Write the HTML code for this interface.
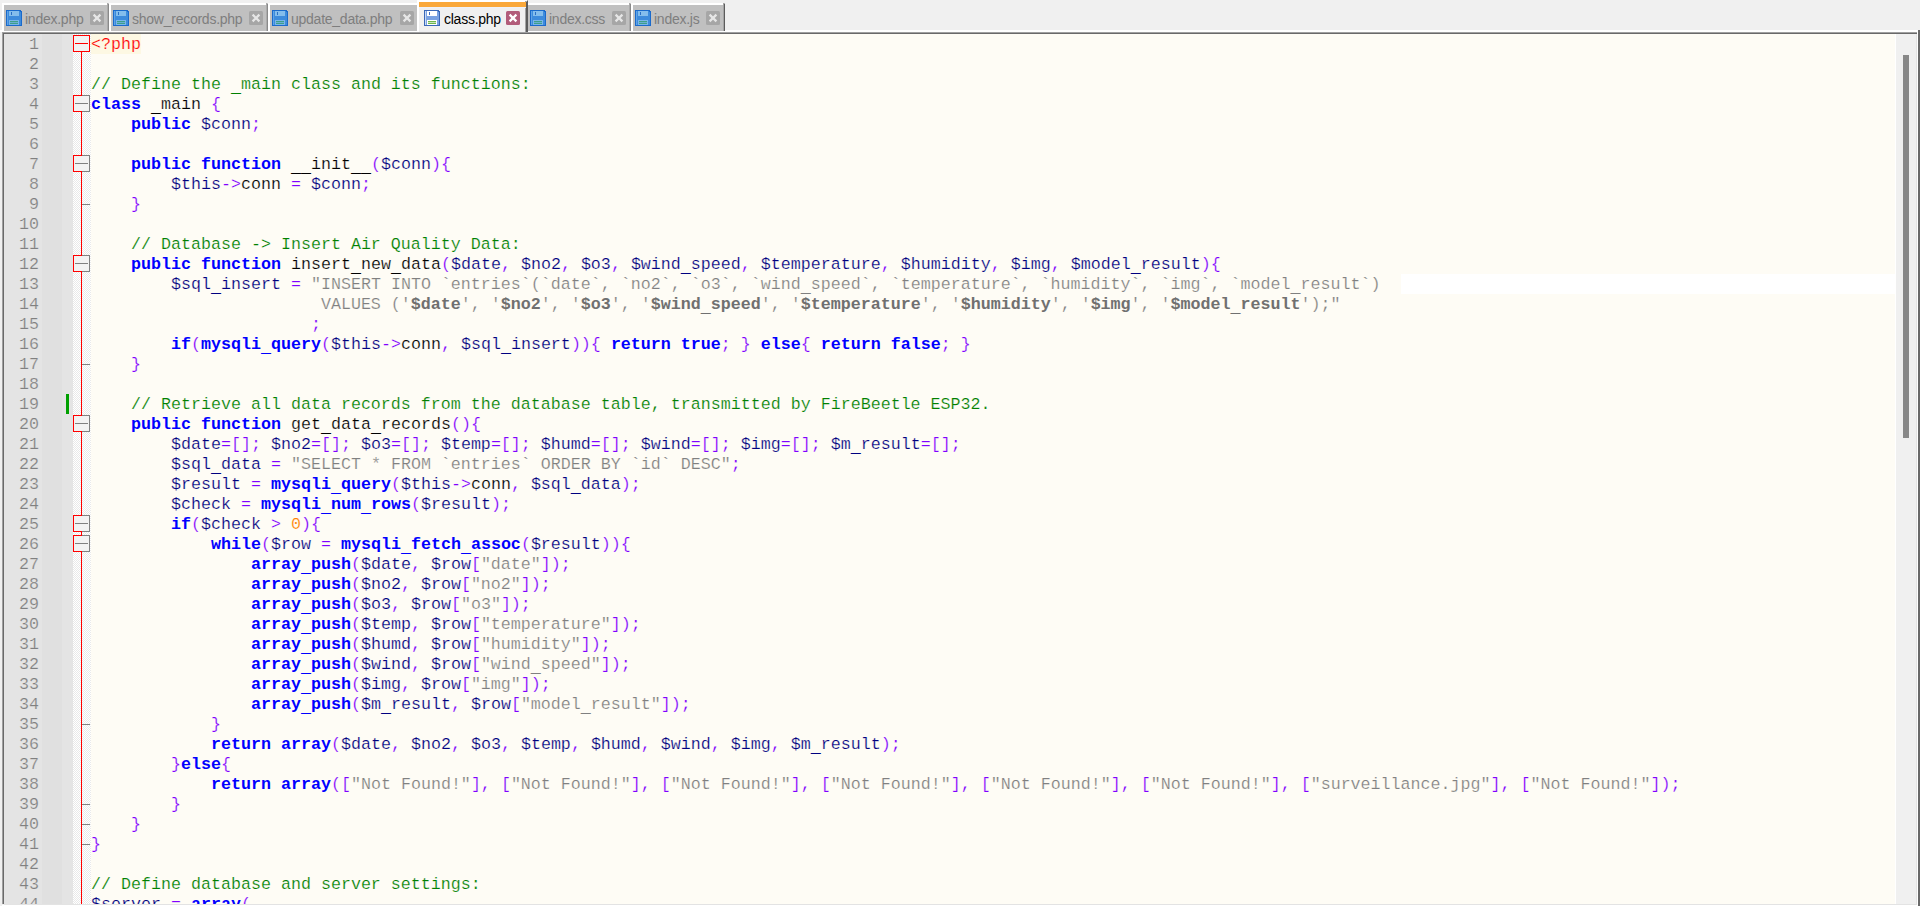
<!DOCTYPE html>
<html><head><meta charset="utf-8"><title>class.php</title>
<style>
html,body{margin:0;padding:0}
body{width:1920px;height:906px;overflow:hidden;background:#f0f0f0;position:relative;font-family:"Liberation Sans",sans-serif}
.abs,.tab,.obar,.oline,.tic,.tl,.tcx,.ln,.cl,.fb,.fe{position:absolute}
/* tab bar */
.tab{top:3px;height:28px;background:#c0c0c0;box-sizing:border-box;border-left:2px solid #fff;border-top:2px solid #fff;border-right:2px solid #8a8a8a}
.tab u{position:absolute;right:-1px;top:-2px;width:1px;height:28px;background:#ababab;display:block}
.tab.last{border-right-color:#5c5c5c}
.tab.last u{background:#a4a4a4}
.tab.nohl{border-left:0}
.tab.nodk{border-right:0}
.tab.nodk u{display:none}
.tab.act{top:0;height:32px;background:#f0f0f0;border-top:2px solid #fff;border-right:2px solid #5c5c5c}
.tab.act:after{content:"";position:absolute;right:0;top:-1px;width:1px;height:31px;background:#a4a4a4}
.obar{top:2px;height:5px;background:#faa83a}
.oline{position:absolute;top:7px;height:1px;background:#eef2f9}
.tic{top:10px;width:16px;height:16px}
.tic svg,.tcx svg{display:block}
.tl{top:10px;height:18px;line-height:18px;font-size:14px;color:#7e7e7e;white-space:pre;letter-spacing:-0.25px;margin-left:0}
.tl.ta{color:#000}
.tcx{top:11px;width:14px;height:14px}
/* editor frame */
#frame{position:absolute;left:2px;top:32px;width:1916px;height:872px;background:#fefcf5;box-sizing:border-box;border-left:1px solid #a0a0a0;border-top:1px solid #a0a0a0}
#frame2{position:absolute;left:3px;top:33px;width:1914px;height:871px;box-sizing:border-box;border-left:1px solid #696969;border-top:1px solid #696969}
#ed{position:absolute;left:0;top:0;width:1920px;height:906px;overflow:hidden}
#clip{position:absolute;left:0;top:0;width:1920px;height:904px;overflow:hidden}
#m1{position:absolute;left:4px;top:34px;width:38px;height:870px;background:#e4e4e4}
#m2{position:absolute;left:42px;top:34px;width:20px;height:870px;background:#e0e0e0}
#m3{position:absolute;left:62px;top:34px;width:11px;height:870px;background:#e4e4e4}
#m4{position:absolute;left:73px;top:34px;width:18px;height:870px;background:repeating-conic-gradient(#e9e9e9 0% 25%,#ffffff 0% 50%) 0 0/2px 2px}
#fl{position:absolute;left:81px;top:52px;width:1px;height:852px;background:#ff0000}
#chg{position:absolute;left:66px;top:394px;width:3px;height:20px;background:#00a000}
#wb{position:absolute;left:1401px;top:274px;width:495px;height:20px;background:#fff}
#sb{position:absolute;left:1895px;top:34px;width:21px;height:870px;background:#f0f0f0;box-sizing:border-box;border-left:1px solid #fff}
#bl1{position:absolute;left:4px;top:904px;width:1913px;height:1px;background:#e3e3e3}
#bl2{position:absolute;left:2px;top:905px;width:1916px;height:1px;background:#fff}
#rl1{position:absolute;left:1916px;top:34px;width:1px;height:871px;background:#e3e3e3}
#th{position:absolute;left:1903px;top:55px;width:6px;height:383px;background:#888}
#re1{position:absolute;left:1917px;top:30px;width:1px;height:876px;background:#fff}
#re2{position:absolute;left:1918px;top:30px;width:2px;height:876px;background:#696969}
#tw{position:absolute;left:0;top:30px;width:1918px;height:2px;background:#fff}
.ln{left:4px;width:35px;height:20px;line-height:20px;text-align:right;font-family:"Liberation Mono",monospace;font-size:16.67px;color:#808080;-webkit-text-stroke:0.2px #e4e4e4;white-space:pre;padding-top:1px;box-sizing:border-box}
.cl{left:91px;height:20px;line-height:20px;font-family:"Liberation Mono",monospace;font-size:16.67px;color:#000;-webkit-text-stroke:0.2px #fefcf5;white-space:pre;padding-top:1px;box-sizing:border-box}
.k{color:#0000ff;font-weight:bold;-webkit-text-stroke:0}
.v{color:#000080}
.o{color:#8000ff}
.s{color:#808080}
.sv{color:#707070;font-weight:bold;-webkit-text-stroke:0}
.c{color:#008000}
.n{color:#ff8000}
.d{color:#000}
.cl u{text-decoration:none;position:relative;top:3px;-webkit-text-stroke:0}
.t{color:#ff0000;-webkit-text-stroke:0.2px #fdf8e3;background:#fdf8e3;display:inline-block;height:20px;margin-top:-1px;padding-top:1px;box-sizing:border-box;vertical-align:top}
/* fold markers */
.fb{left:73px;width:17px;height:17px;box-sizing:border-box;background:#f2f2f2}
.fb.fr{border:1px solid #ff0000}
.fb.fr i{position:absolute;left:1px;top:7px;width:13px;height:1px;background:#ff0000}
.fb.fh{border:1px solid #808080}
.fb.fh b{position:absolute;left:-1px;top:-1px;width:9px;height:17px;box-sizing:border-box;border:1px solid #ff0000;border-right:0}
.fb.fh i{position:absolute;left:1px;top:7px;width:13px;height:1px;background:#808080}
.fe{left:82px;width:8px;height:1px;background:#808080}
</style></head><body>
<div id="ed"><div id="clip">
<div id="tw"></div>
<div class="tab" style="left:2px;width:107px"><u></u></div>
<div class="tic" style="left:6px"><svg class="ic" width="16" height="16" viewBox="0 0 16 16" shape-rendering="crispEdges"><path d="M0 0H14L16 2V16H0Z" fill="#1a6acb"/><path d="M1 1H13.5L15 2.5V15H1Z" fill="#3d8bdc"/><rect x="1" y="1" width="1" height="14" fill="#5fa3e6"/><rect x="3" y="1" width="10" height="5" fill="#84bdec"/><rect x="5" y="2" width="1" height="3" fill="#2a6fc4"/><rect x="3" y="10" width="10" height="5" fill="#7ab5ea"/><rect x="4" y="11" width="8" height="1" fill="#3d9f8a"/><rect x="4" y="12" width="8" height="1" fill="#6aaed0"/><rect x="4" y="13" width="8" height="1" fill="#3d9f8a"/></svg></div>
<div class="tl" style="left:25px">index.php</div>
<div class="tcx" style="left:90px"><svg class="cx" width="14" height="14" viewBox="0 0 14 14"><rect x="0" y="0" width="14" height="14" rx="1.5" fill="#a6a6a6"/><path d="M3.6 3.6L10.4 10.4M10.4 3.6L3.6 10.4" stroke="#e6e6e6" stroke-width="2.2" stroke-linecap="butt"/></svg></div>
<div class="tab" style="left:109px;width:159px"><u></u></div>
<div class="tic" style="left:113px"><svg class="ic" width="16" height="16" viewBox="0 0 16 16" shape-rendering="crispEdges"><path d="M0 0H14L16 2V16H0Z" fill="#1a6acb"/><path d="M1 1H13.5L15 2.5V15H1Z" fill="#3d8bdc"/><rect x="1" y="1" width="1" height="14" fill="#5fa3e6"/><rect x="3" y="1" width="10" height="5" fill="#84bdec"/><rect x="5" y="2" width="1" height="3" fill="#2a6fc4"/><rect x="3" y="10" width="10" height="5" fill="#7ab5ea"/><rect x="4" y="11" width="8" height="1" fill="#3d9f8a"/><rect x="4" y="12" width="8" height="1" fill="#6aaed0"/><rect x="4" y="13" width="8" height="1" fill="#3d9f8a"/></svg></div>
<div class="tl" style="left:132px">show_records.php</div>
<div class="tcx" style="left:249px"><svg class="cx" width="14" height="14" viewBox="0 0 14 14"><rect x="0" y="0" width="14" height="14" rx="1.5" fill="#a6a6a6"/><path d="M3.6 3.6L10.4 10.4M10.4 3.6L3.6 10.4" stroke="#e6e6e6" stroke-width="2.2" stroke-linecap="butt"/></svg></div>
<div class="tab nodk" style="left:268px;width:149px"><u></u></div>
<div class="tic" style="left:272px"><svg class="ic" width="16" height="16" viewBox="0 0 16 16" shape-rendering="crispEdges"><path d="M0 0H14L16 2V16H0Z" fill="#1a6acb"/><path d="M1 1H13.5L15 2.5V15H1Z" fill="#3d8bdc"/><rect x="1" y="1" width="1" height="14" fill="#5fa3e6"/><rect x="3" y="1" width="10" height="5" fill="#84bdec"/><rect x="5" y="2" width="1" height="3" fill="#2a6fc4"/><rect x="3" y="10" width="10" height="5" fill="#7ab5ea"/><rect x="4" y="11" width="8" height="1" fill="#3d9f8a"/><rect x="4" y="12" width="8" height="1" fill="#6aaed0"/><rect x="4" y="13" width="8" height="1" fill="#3d9f8a"/></svg></div>
<div class="tl" style="left:291px">update_data.php</div>
<div class="tcx" style="left:400px"><svg class="cx" width="14" height="14" viewBox="0 0 14 14"><rect x="0" y="0" width="14" height="14" rx="1.5" fill="#a6a6a6"/><path d="M3.6 3.6L10.4 10.4M10.4 3.6L3.6 10.4" stroke="#e6e6e6" stroke-width="2.2" stroke-linecap="butt"/></svg></div>
<div class="tab act" style="left:417px;width:111px"></div>
<div class="obar" style="left:419px;width:107px"></div>
<div class="oline" style="left:419px;width:107px"></div>
<div class="tic" style="left:424px"><svg class="ic" width="16" height="16" viewBox="0 0 16 16" shape-rendering="crispEdges"><path d="M0 0H14L16 2V16H0Z" fill="#3a68b8"/><path d="M1 1H13.5L15 2.5V15H1Z" fill="#7aa2e2"/><rect x="1" y="1" width="1" height="14" fill="#c9daf6"/><rect x="3" y="1" width="10" height="5" fill="#ffffff"/><rect x="5" y="2" width="1" height="3" fill="#3f6cc0"/><rect x="3" y="10" width="10" height="5" fill="#ffffff"/><rect x="4" y="11" width="8" height="1" fill="#6db64b"/><rect x="4" y="12" width="8" height="1" fill="#c9e3bd"/><rect x="4" y="13" width="8" height="1" fill="#6db64b"/></svg></div>
<div class="tl ta" style="left:444px">class.php</div>
<div class="tcx" style="left:506px"><svg class="cx" width="14" height="14" viewBox="0 0 14 14"><rect x="0" y="0" width="14" height="14" rx="1.5" fill="#b25c7a"/><path d="M3.6 3.6L10.4 10.4M10.4 3.6L3.6 10.4" stroke="#ffffff" stroke-width="2.2" stroke-linecap="butt"/></svg></div>
<div class="tab nohl" style="left:528px;width:103px"><u></u></div>
<div class="tic" style="left:530px"><svg class="ic" width="16" height="16" viewBox="0 0 16 16" shape-rendering="crispEdges"><path d="M0 0H14L16 2V16H0Z" fill="#1a6acb"/><path d="M1 1H13.5L15 2.5V15H1Z" fill="#3d8bdc"/><rect x="1" y="1" width="1" height="14" fill="#5fa3e6"/><rect x="3" y="1" width="10" height="5" fill="#84bdec"/><rect x="5" y="2" width="1" height="3" fill="#2a6fc4"/><rect x="3" y="10" width="10" height="5" fill="#7ab5ea"/><rect x="4" y="11" width="8" height="1" fill="#3d9f8a"/><rect x="4" y="12" width="8" height="1" fill="#6aaed0"/><rect x="4" y="13" width="8" height="1" fill="#3d9f8a"/></svg></div>
<div class="tl" style="left:549px">index.css</div>
<div class="tcx" style="left:612px"><svg class="cx" width="14" height="14" viewBox="0 0 14 14"><rect x="0" y="0" width="14" height="14" rx="1.5" fill="#a6a6a6"/><path d="M3.6 3.6L10.4 10.4M10.4 3.6L3.6 10.4" stroke="#e6e6e6" stroke-width="2.2" stroke-linecap="butt"/></svg></div>
<div class="tab last" style="left:631px;width:94px"><u></u></div>
<div class="tic" style="left:635px"><svg class="ic" width="16" height="16" viewBox="0 0 16 16" shape-rendering="crispEdges"><path d="M0 0H14L16 2V16H0Z" fill="#1a6acb"/><path d="M1 1H13.5L15 2.5V15H1Z" fill="#3d8bdc"/><rect x="1" y="1" width="1" height="14" fill="#5fa3e6"/><rect x="3" y="1" width="10" height="5" fill="#84bdec"/><rect x="5" y="2" width="1" height="3" fill="#2a6fc4"/><rect x="3" y="10" width="10" height="5" fill="#7ab5ea"/><rect x="4" y="11" width="8" height="1" fill="#3d9f8a"/><rect x="4" y="12" width="8" height="1" fill="#6aaed0"/><rect x="4" y="13" width="8" height="1" fill="#3d9f8a"/></svg></div>
<div class="tl" style="left:654px">index.js</div>
<div class="tcx" style="left:706px"><svg class="cx" width="14" height="14" viewBox="0 0 14 14"><rect x="0" y="0" width="14" height="14" rx="1.5" fill="#a6a6a6"/><path d="M3.6 3.6L10.4 10.4M10.4 3.6L3.6 10.4" stroke="#e6e6e6" stroke-width="2.2" stroke-linecap="butt"/></svg></div>
<div id="frame"></div><div id="frame2"></div>
<div id="m1"></div><div id="m2"></div><div id="m3"></div><div id="m4"></div>
<div id="wb"></div>
<div id="fl"></div><div id="chg"></div>
<div class="ln" style="top:34px">1</div>
<div class="cl" style="top:34px"><span class="t">&lt;?php</span></div>
<div class="ln" style="top:54px">2</div>
<div class="ln" style="top:74px">3</div>
<div class="cl" style="top:74px"><span class="c">// Define the <u>_</u>main class and its functions:</span></div>
<div class="ln" style="top:94px">4</div>
<div class="cl" style="top:94px"><span class="k">class</span> <span class="d"><u>_</u>main</span> <span class="o">{</span></div>
<div class="ln" style="top:114px">5</div>
<div class="cl" style="top:114px">    <span class="k">public</span> <span class="v">$conn</span><span class="o">;</span></div>
<div class="ln" style="top:134px">6</div>
<div class="ln" style="top:154px">7</div>
<div class="cl" style="top:154px">    <span class="k">public</span> <span class="k">function</span> <span class="d"><u>_</u><u>_</u>init<u>_</u><u>_</u></span><span class="o">(</span><span class="v">$conn</span><span class="o">){</span></div>
<div class="ln" style="top:174px">8</div>
<div class="cl" style="top:174px">        <span class="v">$this</span><span class="o">-&gt;</span><span class="d">conn</span> <span class="o">=</span> <span class="v">$conn</span><span class="o">;</span></div>
<div class="ln" style="top:194px">9</div>
<div class="cl" style="top:194px">    <span class="o">}</span></div>
<div class="ln" style="top:214px">10</div>
<div class="ln" style="top:234px">11</div>
<div class="cl" style="top:234px">    <span class="c">// Database -&gt; Insert Air Quality Data:</span></div>
<div class="ln" style="top:254px">12</div>
<div class="cl" style="top:254px">    <span class="k">public</span> <span class="k">function</span> <span class="d">insert<u>_</u>new<u>_</u>data</span><span class="o">(</span><span class="v">$date</span><span class="o">,</span> <span class="v">$no2</span><span class="o">,</span> <span class="v">$o3</span><span class="o">,</span> <span class="v">$wind<u>_</u>speed</span><span class="o">,</span> <span class="v">$temperature</span><span class="o">,</span> <span class="v">$humidity</span><span class="o">,</span> <span class="v">$img</span><span class="o">,</span> <span class="v">$model<u>_</u>result</span><span class="o">){</span></div>
<div class="ln" style="top:274px">13</div>
<div class="cl" style="top:274px">        <span class="v">$sql<u>_</u>insert</span> <span class="o">=</span> <span class="s">"INSERT INTO `entries`(`date`, `no2`, `o3`, `wind<u>_</u>speed`, `temperature`, `humidity`, `img`, `model<u>_</u>result`)</span></div>
<div class="ln" style="top:294px">14</div>
<div class="cl" style="top:294px"><span class="s">                       VALUES ('</span><span class="sv">$date</span><span class="s">', '</span><span class="sv">$no2</span><span class="s">', '</span><span class="sv">$o3</span><span class="s">', '</span><span class="sv">$wind<u>_</u>speed</span><span class="s">', '</span><span class="sv">$temperature</span><span class="s">', '</span><span class="sv">$humidity</span><span class="s">', '</span><span class="sv">$img</span><span class="s">', '</span><span class="sv">$model<u>_</u>result</span><span class="s">');"</span></div>
<div class="ln" style="top:314px">15</div>
<div class="cl" style="top:314px">                      <span class="o">;</span></div>
<div class="ln" style="top:334px">16</div>
<div class="cl" style="top:334px">        <span class="k">if</span><span class="o">(</span><span class="k">mysqli<u>_</u>query</span><span class="o">(</span><span class="v">$this</span><span class="o">-&gt;</span><span class="d">conn</span><span class="o">,</span> <span class="v">$sql<u>_</u>insert</span><span class="o">)){</span> <span class="k">return</span> <span class="k">true</span><span class="o">;</span> <span class="o">}</span> <span class="k">else</span><span class="o">{</span> <span class="k">return</span> <span class="k">false</span><span class="o">;</span> <span class="o">}</span></div>
<div class="ln" style="top:354px">17</div>
<div class="cl" style="top:354px">    <span class="o">}</span></div>
<div class="ln" style="top:374px">18</div>
<div class="ln" style="top:394px">19</div>
<div class="cl" style="top:394px">    <span class="c">// Retrieve all data records from the database table, transmitted by FireBeetle ESP32.</span></div>
<div class="ln" style="top:414px">20</div>
<div class="cl" style="top:414px">    <span class="k">public</span> <span class="k">function</span> <span class="d">get<u>_</u>data<u>_</u>records</span><span class="o">(){</span></div>
<div class="ln" style="top:434px">21</div>
<div class="cl" style="top:434px">        <span class="v">$date</span><span class="o">=[];</span> <span class="v">$no2</span><span class="o">=[];</span> <span class="v">$o3</span><span class="o">=[];</span> <span class="v">$temp</span><span class="o">=[];</span> <span class="v">$humd</span><span class="o">=[];</span> <span class="v">$wind</span><span class="o">=[];</span> <span class="v">$img</span><span class="o">=[];</span> <span class="v">$m<u>_</u>result</span><span class="o">=[];</span></div>
<div class="ln" style="top:454px">22</div>
<div class="cl" style="top:454px">        <span class="v">$sql<u>_</u>data</span> <span class="o">=</span> <span class="s">"SELECT * FROM `entries` ORDER BY `id` DESC"</span><span class="o">;</span></div>
<div class="ln" style="top:474px">23</div>
<div class="cl" style="top:474px">        <span class="v">$result</span> <span class="o">=</span> <span class="k">mysqli<u>_</u>query</span><span class="o">(</span><span class="v">$this</span><span class="o">-&gt;</span><span class="d">conn</span><span class="o">,</span> <span class="v">$sql<u>_</u>data</span><span class="o">);</span></div>
<div class="ln" style="top:494px">24</div>
<div class="cl" style="top:494px">        <span class="v">$check</span> <span class="o">=</span> <span class="k">mysqli<u>_</u>num<u>_</u>rows</span><span class="o">(</span><span class="v">$result</span><span class="o">);</span></div>
<div class="ln" style="top:514px">25</div>
<div class="cl" style="top:514px">        <span class="k">if</span><span class="o">(</span><span class="v">$check</span> <span class="o">&gt;</span> <span class="n">0</span><span class="o">){</span></div>
<div class="ln" style="top:534px">26</div>
<div class="cl" style="top:534px">            <span class="k">while</span><span class="o">(</span><span class="v">$row</span> <span class="o">=</span> <span class="k">mysqli<u>_</u>fetch<u>_</u>assoc</span><span class="o">(</span><span class="v">$result</span><span class="o">)){</span></div>
<div class="ln" style="top:554px">27</div>
<div class="cl" style="top:554px">                <span class="k">array<u>_</u>push</span><span class="o">(</span><span class="v">$date</span><span class="o">,</span> <span class="v">$row</span><span class="o">[</span><span class="s">"date"</span><span class="o">]);</span></div>
<div class="ln" style="top:574px">28</div>
<div class="cl" style="top:574px">                <span class="k">array<u>_</u>push</span><span class="o">(</span><span class="v">$no2</span><span class="o">,</span> <span class="v">$row</span><span class="o">[</span><span class="s">"no2"</span><span class="o">]);</span></div>
<div class="ln" style="top:594px">29</div>
<div class="cl" style="top:594px">                <span class="k">array<u>_</u>push</span><span class="o">(</span><span class="v">$o3</span><span class="o">,</span> <span class="v">$row</span><span class="o">[</span><span class="s">"o3"</span><span class="o">]);</span></div>
<div class="ln" style="top:614px">30</div>
<div class="cl" style="top:614px">                <span class="k">array<u>_</u>push</span><span class="o">(</span><span class="v">$temp</span><span class="o">,</span> <span class="v">$row</span><span class="o">[</span><span class="s">"temperature"</span><span class="o">]);</span></div>
<div class="ln" style="top:634px">31</div>
<div class="cl" style="top:634px">                <span class="k">array<u>_</u>push</span><span class="o">(</span><span class="v">$humd</span><span class="o">,</span> <span class="v">$row</span><span class="o">[</span><span class="s">"humidity"</span><span class="o">]);</span></div>
<div class="ln" style="top:654px">32</div>
<div class="cl" style="top:654px">                <span class="k">array<u>_</u>push</span><span class="o">(</span><span class="v">$wind</span><span class="o">,</span> <span class="v">$row</span><span class="o">[</span><span class="s">"wind<u>_</u>speed"</span><span class="o">]);</span></div>
<div class="ln" style="top:674px">33</div>
<div class="cl" style="top:674px">                <span class="k">array<u>_</u>push</span><span class="o">(</span><span class="v">$img</span><span class="o">,</span> <span class="v">$row</span><span class="o">[</span><span class="s">"img"</span><span class="o">]);</span></div>
<div class="ln" style="top:694px">34</div>
<div class="cl" style="top:694px">                <span class="k">array<u>_</u>push</span><span class="o">(</span><span class="v">$m<u>_</u>result</span><span class="o">,</span> <span class="v">$row</span><span class="o">[</span><span class="s">"model<u>_</u>result"</span><span class="o">]);</span></div>
<div class="ln" style="top:714px">35</div>
<div class="cl" style="top:714px">            <span class="o">}</span></div>
<div class="ln" style="top:734px">36</div>
<div class="cl" style="top:734px">            <span class="k">return</span> <span class="k">array</span><span class="o">(</span><span class="v">$date</span><span class="o">,</span> <span class="v">$no2</span><span class="o">,</span> <span class="v">$o3</span><span class="o">,</span> <span class="v">$temp</span><span class="o">,</span> <span class="v">$humd</span><span class="o">,</span> <span class="v">$wind</span><span class="o">,</span> <span class="v">$img</span><span class="o">,</span> <span class="v">$m<u>_</u>result</span><span class="o">);</span></div>
<div class="ln" style="top:754px">37</div>
<div class="cl" style="top:754px">        <span class="o">}</span><span class="k">else</span><span class="o">{</span></div>
<div class="ln" style="top:774px">38</div>
<div class="cl" style="top:774px">            <span class="k">return</span> <span class="k">array</span><span class="o">([</span><span class="s">"Not Found!"</span><span class="o">],</span> <span class="o">[</span><span class="s">"Not Found!"</span><span class="o">],</span> <span class="o">[</span><span class="s">"Not Found!"</span><span class="o">],</span> <span class="o">[</span><span class="s">"Not Found!"</span><span class="o">],</span> <span class="o">[</span><span class="s">"Not Found!"</span><span class="o">],</span> <span class="o">[</span><span class="s">"Not Found!"</span><span class="o">],</span> <span class="o">[</span><span class="s">"surveillance.jpg"</span><span class="o">],</span> <span class="o">[</span><span class="s">"Not Found!"</span><span class="o">]);</span></div>
<div class="ln" style="top:794px">39</div>
<div class="cl" style="top:794px">        <span class="o">}</span></div>
<div class="ln" style="top:814px">40</div>
<div class="cl" style="top:814px">    <span class="o">}</span></div>
<div class="ln" style="top:834px">41</div>
<div class="cl" style="top:834px"><span class="o">}</span></div>
<div class="ln" style="top:854px">42</div>
<div class="ln" style="top:874px">43</div>
<div class="cl" style="top:874px"><span class="c">// Define database and server settings:</span></div>
<div class="ln" style="top:894px">44</div>
<div class="cl" style="top:894px"><span class="v">$server</span> <span class="o">=</span> <span class="k">array</span><span class="o">(</span></div>
<div class="fb fr" style="top:35px"><i></i></div>
<div class="fb fh" style="top:95px"><b></b><i></i></div>
<div class="fb fh" style="top:155px"><b></b><i></i></div>
<div class="fb fh" style="top:255px"><b></b><i></i></div>
<div class="fb fh" style="top:415px"><b></b><i></i></div>
<div class="fb fh" style="top:515px"><b></b><i></i></div>
<div class="fb fh" style="top:535px"><b></b><i></i></div>
<div class="fe" style="top:204px"></div>
<div class="fe" style="top:364px"></div>
<div class="fe" style="top:724px"></div>
<div class="fe" style="top:804px"></div>
<div class="fe" style="top:824px"></div>
<div class="fe" style="top:844px"></div>
<div id="sb"></div><div id="th"></div>
</div>
<div id="bl1"></div><div id="bl2"></div><div id="rl1"></div>
<div id="re1"></div><div id="re2"></div>
</div>
</body></html>
